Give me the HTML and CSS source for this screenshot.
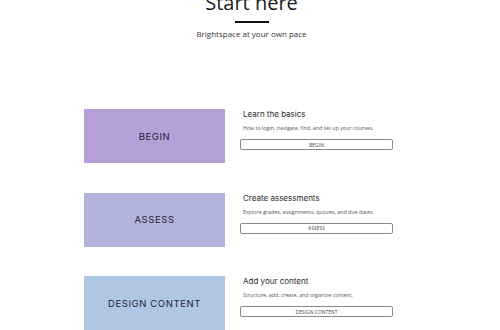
FILE: index.html
```html
<!DOCTYPE html>
<html lang="en">
<head>
  <meta charset="UTF-8">
  <meta name="viewport" content="width=device-width, initial-scale=1.0">
  <title>Start here</title>
  <link rel="stylesheet" href="styles.css">
</head>
<body>
  <header class="intro">
    <h1>Start here</h1>
    <div class="rule"></div>
    <p>Brightspace at your own pace</p>
  </header>

  <main class="paths">
    <section class="path">
      <div class="tile begin">BEGIN</div>
      <div class="info">
        <h2>Learn the basics</h2>
        <p>How to login, navigate, find, and set up your courses.</p>
        <a href="#" class="btn">BEGIN</a>
      </div>
    </section>

    <section class="path">
      <div class="tile assess">ASSESS</div>
      <div class="info">
        <h2>Create assessments</h2>
        <p>Explore grades, assignments, quizzes, and due dates.</p>
        <a href="#" class="btn">ASSESS</a>
      </div>
    </section>

    <section class="path">
      <div class="tile design">DESIGN CONTENT</div>
      <div class="info">
        <h2>Add your content</h2>
        <p>Structure, add, create, and organize content.</p>
        <a href="#" class="btn">DESIGN CONTENT</a>
      </div>
    </section>
  </main>
</body>
</html>
```

FILE: styles.css
```css
* { box-sizing: border-box; }
body {
  margin: 0;
  background: #fff;
  font-family: "Open Sans", sans-serif;
  color: #222;
  overflow: hidden;
}

.intro {
  text-align: center;
  padding-left: 3px;
}
.intro h1 {
  margin: -9px 0 0;
  font-size: 20px;
  line-height: 24px;
  font-weight: 400;
  color: #1a1a1a;
}
.intro .rule {
  width: 34px;
  height: 2px;
  margin: 6px auto 0;
  background: #111;
}
.intro p {
  margin: 5px 0 0;
  font-size: 8px;
  line-height: 12px;
  color: #333;
}

.paths {
  margin: 69px 0 0 84px;
  display: flex;
  flex-direction: column;
  gap: 29.5px;
}
.path {
  display: flex;
  gap: 15px;
}
.tile {
  width: 141px;
  height: 54px;
  display: flex;
  align-items: center;
  justify-content: center;
  font-family: Inter, sans-serif;
  font-size: 9.5px;
  font-weight: 400;
  letter-spacing: 0.6px;
  color: #1e1e3a;
}
.tile.begin { background: #b49fd6; }
.tile.assess { background: #b3b4dd; }
.tile.design { background: #afc6e4; }

.info {
  width: 153px;
  display: flex;
  flex-direction: column;
}
.info h2 {
  margin: 0;
  padding-left: 3px;
  font-family: Inter, sans-serif;
  font-size: 8px;
  line-height: 10px;
  font-weight: 400;
  color: #2b2b2b;
}
.info p {
  margin: 6px 0 0;
  padding-left: 3px;
  font-size: 5.3px;
  line-height: 7px;
  color: #555;
}
.btn {
  margin-top: 7px;
  height: 11px;
  display: flex;
  align-items: center;
  justify-content: center;
  border: 1px solid #8a8a8a;
  border-radius: 2px;
  font-size: 4.8px;
  color: #444;
  text-decoration: none;
  letter-spacing: 0.1px;
}
```
